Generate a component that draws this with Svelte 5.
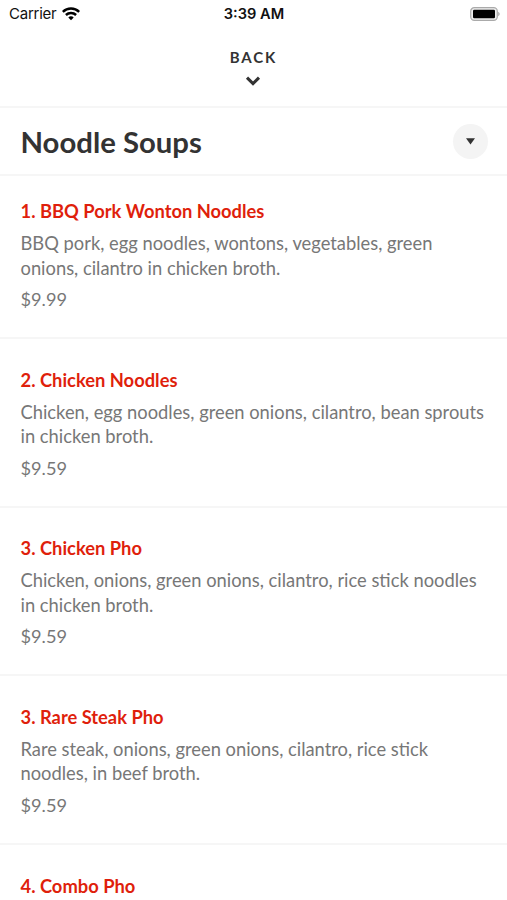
<script>
  const items = [
    { name: '1. BBQ Pork Wonton Noodles', lines: ['BBQ pork, egg noodles, wontons, vegetables, green', 'onions, cilantro in chicken broth.'], price: '$9.99' },
    { name: '2. Chicken Noodles', lines: ['Chicken, egg noodles, green onions, cilantro, bean sprouts', 'in chicken broth.'], price: '$9.59' },
    { name: '3. Chicken Pho', lines: ['Chicken, onions, green onions, cilantro, rice stick noodles', 'in chicken broth.'], price: '$9.59' },
    { name: '3. Rare Steak Pho', lines: ['Rare steak, onions, green onions, cilantro, rice stick', 'noodles, in beef broth.'], price: '$9.59' },
    { name: '4. Combo Pho', lines: [], price: '' }
  ];
</script>

<div class="screen">
  <header class="status">
    <div class="carrier">
      <span>Carrier</span>
      <svg width="18" height="14" viewBox="0 0 18 14" fill="none" stroke="#000" stroke-width="2.5">
        <path d="M.8 4.9C5.3 .4 12.7 .4 17.2 4.9" />
        <path d="M3.9 8C6.7 5.4 11.3 5.4 14.1 8" />
        <path d="M9 13.2L6.3 10.4C7.8 9 10.2 9 11.7 10.4Z" fill="#000" stroke="none" />
      </svg>
    </div>
    <time>3:39 AM</time>
    <svg class="battery" width="31" height="14" viewBox="0 0 31 14">
      <rect x="1.7" y=".7" width="26.6" height="12.6" rx="3.6" fill="#eee" stroke="#aaa" stroke-width="1.2" />
      <rect x="4" y="2.7" width="22" height="8.6" rx="1.2" />
      <path d="M29.2 4.8C31.1 5.6 31.1 8.4 29.2 9.2Z" fill="#aaa" />
    </svg>
  </header>
  <button class="back">
    <span>BACK</span>
    <svg width="16" height="10" viewBox="0 0 16 10" fill="none" stroke="#333" stroke-width="3.1"><path d="M2 1.7L8 7.5L14 1.7" /></svg>
  </button>
  <div class="heading">
    <h1>Noodle Soups</h1>
    <button class="toggle" aria-label="Choose category">
      <svg width="9" height="7" viewBox="0 0 9 7"><path d="M0 .2H9L4.5 6.5Z" fill="#333" /></svg>
    </button>
  </div>
  <main>
    {#each items as item}
      <article>
        <h2>{item.name}</h2>
        {#if item.lines.length}
          <p>{#each item.lines as line}<span>{line}</span>{/each}</p>
          <div class="price">{item.price}</div>
        {/if}
      </article>
    {/each}
  </main>
</div>

<style>
  .screen { width: 507px; height: 900px; overflow: hidden; background: #fff; color: #333; font-family: Lato, sans-serif; }
  .status { height: 28px; display: grid; grid-template-columns: 1fr auto 1fr; align-items: center; padding: 0 7px 0 9px; box-sizing: border-box; font: 15px/28px Inter, sans-serif; color: #111; }
  .carrier { display: flex; align-items: center; gap: 6px; }
  .carrier span { letter-spacing: -.25px; }
  time { font-weight: 600; font-size: 14.6px; margin-right: 1px; }
  .battery { justify-self: end; margin: -1px 0 0 0; }
  button { border: 0; padding: 0; font: inherit; color: inherit; }
  .back { width: 100%; height: 80px; box-sizing: border-box; padding: 20px 1px 0 0; border-bottom: 2px solid #f6f6f6; background: #fff; display: flex; flex-direction: column; align-items: center; gap: 10px; font-size: 15px; line-height: 18px; font-weight: 700; letter-spacing: 1.9px; }
  .back span { margin-right: -1px; }
  .back svg { flex: none; }
  .heading { height: 68px; box-sizing: border-box; border-bottom: 2px solid #f6f6f6; padding: 0 19px 0 20.5px; display: flex; align-items: center; justify-content: space-between; }
  h1 { margin: 2px 0 0; font-size: 29.3px; line-height: 34px; font-weight: 700; }
  .toggle { width: 35px; height: 35px; border-radius: 50%; background: #f4f4f4; display: flex; align-items: center; justify-content: center; }
  article { height: 168.6px; box-sizing: border-box; border-bottom: 2px solid #f6f6f6; padding: 28.6px 0 0 20.5px; }
  article:first-child { height: 163.2px; padding-top: 23.2px; }
  h2 { margin: 0 0 8px; color: #df1f0c; font-size: 18.33px; line-height: 24px; font-weight: 700; }
  p { margin: 0 0 7px; }
  p span { display: block; white-space: nowrap; }
  p, .price { color: #777; font-size: 18.34px; line-height: 24.5px; }
  .price { font-size: 18.2px; }
</style>
